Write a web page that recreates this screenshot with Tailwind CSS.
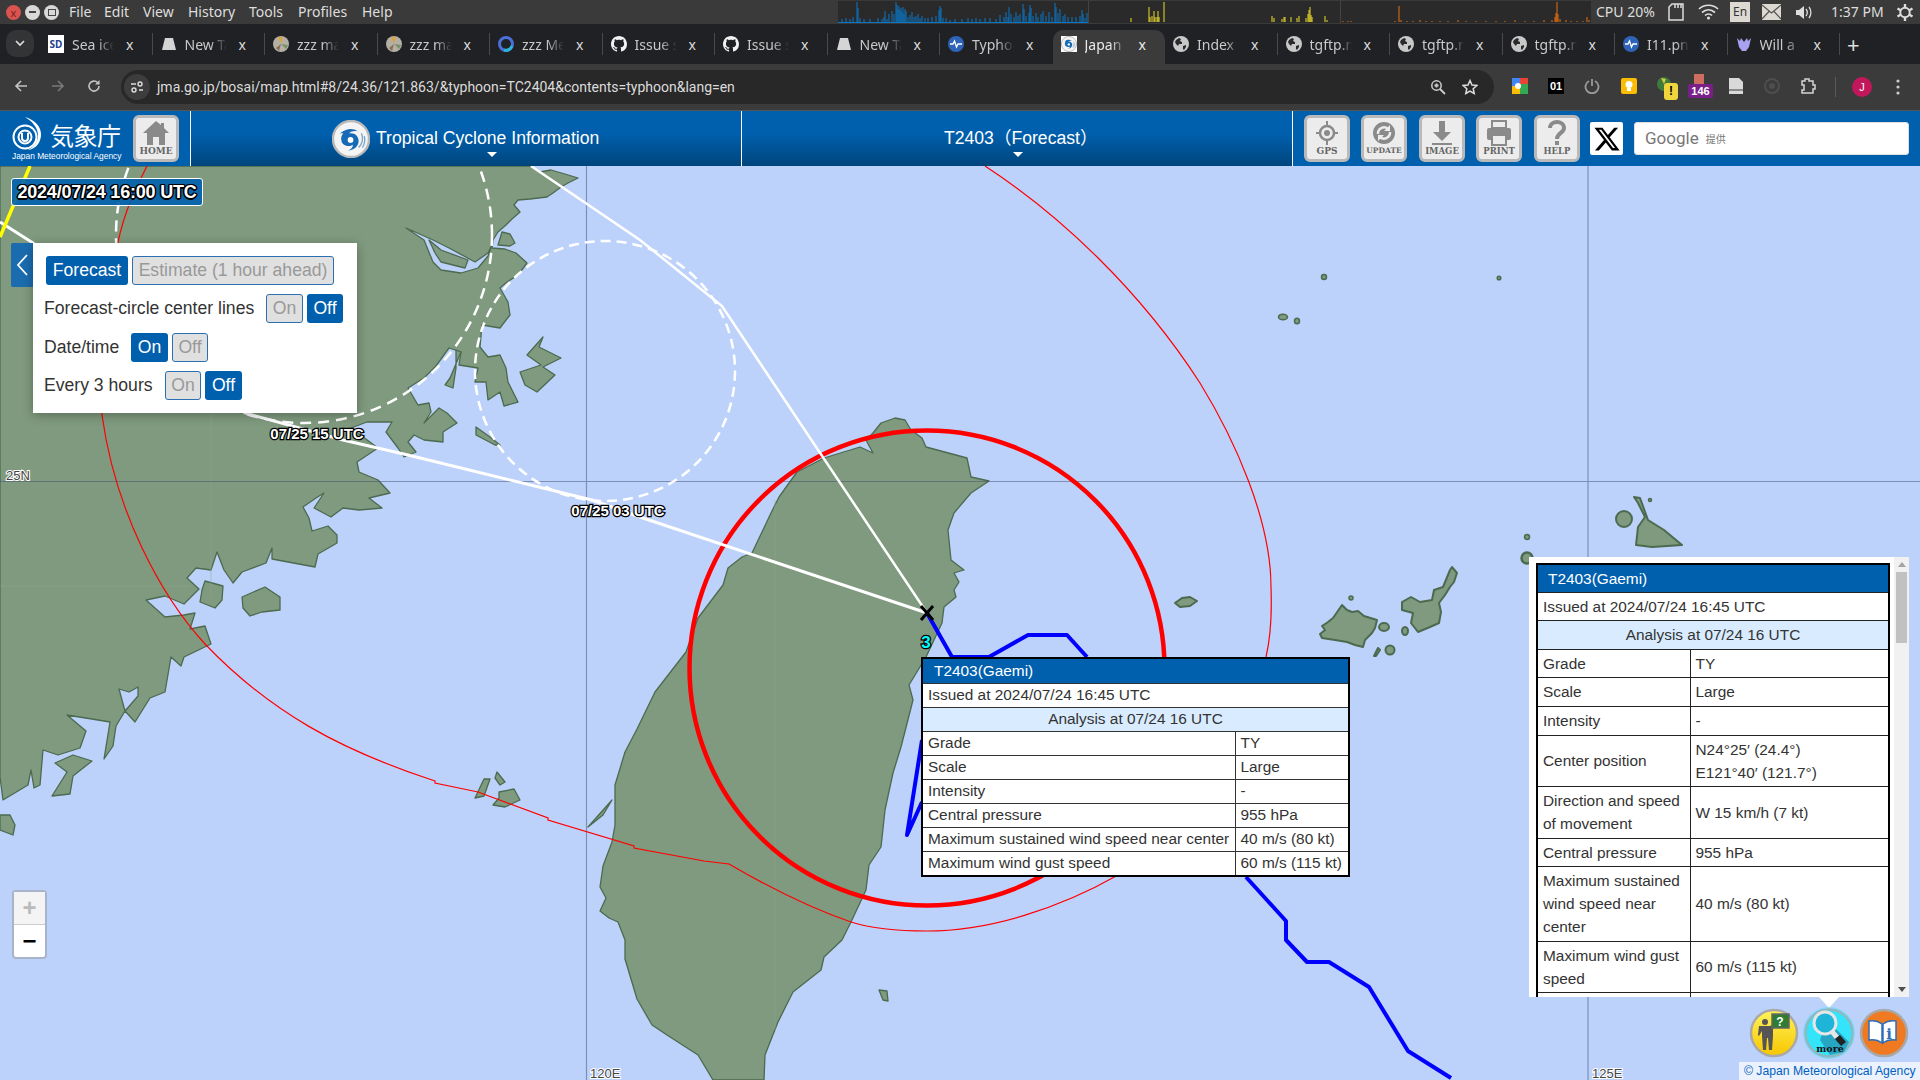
<!DOCTYPE html>
<html lang="en">
<head>
<meta charset="utf-8">
<title>Tropical Cyclone Information</title>
<script src="https://cdn.jsdelivr.net/npm/@tailwindcss/browser@4"></script>
</head>
<body class="w-[1920px] h-[1080px] overflow-hidden bg-[#202124] font-['Liberation_Sans',sans-serif]">
<svg width="0" height="0" class="absolute">
  <defs>
    <symbol id="gh" viewBox="0 0 16 16"><path fill="#f2f2f2" d="M8 0C3.58 0 0 3.58 0 8c0 3.54 2.29 6.53 5.47 7.59.4.07.55-.17.55-.38 0-.19-.01-.82-.01-1.49-2.01.37-2.53-.49-2.69-.94-.09-.23-.48-.94-.82-1.13-.28-.15-.68-.52-.01-.53.63-.01 1.08.58 1.23.82.72 1.21 1.87.87 2.33.66.07-.52.28-.87.51-1.07-1.78-.2-3.64-.89-3.64-3.95 0-.87.31-1.59.82-2.15-.08-.2-.36-1.02.08-2.12 0 0 .67-.21 2.2.82.64-.18 1.32-.27 2-.27.68 0 1.36.09 2 .27 1.53-1.04 2.2-.82 2.2-.82.44 1.1.16 1.92.08 2.12.51.56.82 1.27.82 2.15 0 3.07-1.87 3.75-3.65 3.95.29.25.54.73.54 1.48 0 1.07-.01 1.93-.01 2.2 0 .21.15.46.55.38A8.013 8.013 0 0016 8c0-4.42-3.58-8-8-8z"/></symbol>
    <symbol id="globe" viewBox="0 0 16 16"><circle cx="8" cy="8" r="8" fill="#c8c8c8"/><path fill="#2a2a2a" d="M3 4l3-2 2 1-1 2 2 1 0 2-3 0-1 2-2-2-1-2zM10 10l3-1 0 2-2 3-1-1z"/></symbol>
    <symbol id="newtab" viewBox="0 0 16 16"><path fill="#d5d5d5" d="M4 2h8l3 12H1z"/></symbol>
    <symbol id="marker" viewBox="0 0 16 16"><circle cx="8" cy="8" r="8" fill="#b5b0a5"/><path fill="#d9a441" d="M8 8L5 1h5z"/><path fill="#7d8f6a" d="M8 8l7 1-2 4z"/><path fill="#8a6d5a" d="M8 8l-2 7-3-3z"/></symbol>
    <symbol id="pulse" viewBox="0 0 16 16"><circle cx="8" cy="8" r="8" fill="#2e63b8"/><path fill="none" stroke="#fff" stroke-width="1.3" d="M2 8h3l1.5-3 2 6L10 8h4"/></symbol>
    <symbol id="swirl" viewBox="0 0 40 40"><circle cx="20" cy="20" r="19" fill="#f4f4f4" stroke="#b9b9b9" stroke-width="2.5"/><path fill="#1569b5" d="M10 13c5-4 12-5 17-1-4-1-7 0-9 2 6-1 10 3 10 8 0 6-6 10-11 10 3-1 5-3 5-6-4 3-11 1-12-4-1-3 0-6 2-8-2 0-3 0-4 1z"/><circle cx="19.500" cy="21" r="3" fill="#fff"/><path fill="none" stroke="#7aa6cc" stroke-width="1.4" d="M31 14c2 5 1 11-3 15M34 17c1 4 0 9-2 12"/></symbol>
  </defs>
</svg>

<!-- system bar -->
<div class="h-[24px] bg-[#3a3a3a] flex items-center text-[#dedede] text-[14px] font-['Noto_Sans',sans-serif] relative">
  <div class="flex items-center w-[69px] pl-[6px] gap-[4px] shrink-0">
    <span class="w-[15px] h-[15px] rounded-full bg-[#d9534f] text-[#7a1f1c] text-[11px] leading-[15px] text-center">x</span>
    <span class="w-[15px] h-[15px] rounded-full bg-[#d8d8d8] flex items-center justify-center"><span class="w-[7px] h-[2px] bg-[#444]"></span></span>
    <span class="w-[15px] h-[15px] rounded-full bg-[#d8d8d8] flex items-center justify-center"><span class="w-[8px] h-[7px] border-[1.5px] border-[#444]"></span></span>
  </div>
  <div class="flex items-center leading-[24px] text-[14px] w-[769px] shrink-0">
    <span class="w-[35px]">File</span><span class="w-[39px]">Edit</span><span class="w-[45px]">View</span><span class="w-[61px]">History</span><span class="w-[49px]">Tools</span><span class="w-[64px]">Profiles</span><span>Help</span>
  </div>
  <svg width="753" height="22" viewBox="838 2 753 22" class="shrink-0 bg-[#2a2a2a]">
    <path stroke="#0b76c4" stroke-width="1" fill="none" d="M838 23.500H1088M842 23V20M846 23V19M850 23V20M853 23V18M857 23V3M858 23V9M860 23V19M864 23V20M870 23V20M878 23V19M882 23V20M884 23V18M885 23V12M887 23V20M889 23V15M892 23V12M894 23V15M896 23V3M897 23V6M898 23V10M899 23V7M900 23V11M901 23V9M902 23V13M903 23V8M904 23V15M905 23V10M906 23V12M908 23V18M910 23V16M912 23V13M914 23V18M916 23V17M918 23V15M920 23V19M922 23V17M925 23V19M928 23V19M932 23V18M936 23V17M939 23V11M940 23V7M941 23V9M943 23V19M946 23V19M950 23V21M955 23V20M962 23V20M968 23V19M972 23V20M976 23V19M980 23V20M985 23V19M990 23V19M996 23V20M1000 23V16M1004 23V18M1006 23V13M1008 23V18M1009 23V8M1011 23V15M1014 23V18M1016 23V13M1018 23V17M1020 23V15M1023 23V5M1024 23V10M1026 23V17M1029 23V14M1030 23V6M1031 23V9M1033 23V17M1036 23V14M1038 23V18M1041 23V15M1043 23V12M1046 23V17M1049 23V13M1052 23V18M1055 23V4M1056 23V8M1058 23V14M1060 23V10M1063 23V17M1065 23V15M1068 23V18M1072 23V18M1076 23V18M1080 23V17M1082 23V11M1083 23V15M1085 23V19M1087 23V14"/>
    <rect x="1088" y="2" width="1" height="22" fill="#444"/>
    <path stroke="#ecdc2b" stroke-width="1" fill="none" d="M1131 23V19M1149 23V8M1150 23V18M1152 23V17M1154 23V12M1155 23V18M1157 23V18M1158 23V12M1159 23V18M1164 23V3M1272 23V17M1274 23V19M1282 23V20M1284 23V18M1285 23V18M1291 23V18M1297 23V19M1299 23V17M1306 23V19M1308 23V15M1309 23V11M1310 23V8M1311 23V16M1312 23V18M1325 23V17M1327 23V21"/>
    <rect x="1340" y="2" width="1" height="22" fill="#444"/>
    <path stroke="#e8700f" stroke-width="1" fill="none" d="M1343 23V22M1348 23V22M1351 23V22M1395 23V22M1399 23V7M1401 23V21M1407 23V22M1413 23V22M1420 23V21M1426 23V22M1432 23V22M1440 23V22M1448 23V22M1458 23V21M1466 23V22M1476 23V22M1486 23V22M1496 23V22M1505 23V22M1515 23V21M1525 23V22M1534 23V22M1544 23V21M1552 23V21M1555 23V18M1556 23V14M1557 23V3M1558 23V15M1560 23V20M1566 23V21M1571 23V22M1577 23V22M1583 23V22M1587 23V18M1589 23V21"/>
  </svg>
  <span class="absolute left-[1596px] top-0 leading-[24px] text-[14px]">CPU 20%</span>
  <svg class="absolute left-[1668px] top-[3px]" width="16" height="18" viewBox="0 0 16 18"><path fill="none" stroke="#ddd" stroke-width="1.5" d="M4 1h11v16H1V4zM7 1v4M10 1v4M13 1v4"/></svg>
  <svg class="absolute left-[1698px] top-[4px]" width="21" height="16" viewBox="0 0 21 16"><path fill="none" stroke="#ddd" stroke-width="1.700" d="M1 5c5-5 14-5 19 0M4 8.500c4-3.500 9-3.500 13 0M7 11.500c2-2 5-2 7 0"/><circle cx="10.500" cy="14" r="1.600" fill="#ddd"/></svg>
  <span class="absolute left-[1730px] top-[2px] w-[20px] h-[20px] bg-[#ddd9d2] text-[#333] text-[12px] leading-[20px] text-center">En</span>
  <svg class="absolute left-[1762px] top-[4px]" width="19" height="16" viewBox="0 0 19 16"><rect width="19" height="16" fill="#ddd9d2"/><path fill="none" stroke="#555" stroke-width="1.200" d="M0 1l9.500 8L19 1M0 15l7-7.500M19 15l-7-7.500"/></svg>
  <svg class="absolute left-[1796px] top-[5px]" width="18" height="15" viewBox="0 0 18 15"><path fill="#ddd" d="M0 5h3l5-4v13l-5-4H0z"/><path fill="none" stroke="#ddd" stroke-width="1.300" d="M10 4c1.500 2 1.500 5 0 7M13 2c2.500 3 2.500 8 0 11"/></svg>
  <span class="absolute left-[1831px] top-0 leading-[24px] text-[14px]">1:37 PM</span>
  <svg class="absolute left-[1897px] top-[4px]" width="16" height="17" viewBox="0 0 16 17"><circle cx="8" cy="8.500" r="4.700" fill="none" stroke="#ddd" stroke-width="2"/><path stroke="#ddd" stroke-width="2.400" d="M8 0v3.500M8 13.500V17M0.500 4.500l3 1.800M12.500 10.700l3 1.800M0.500 12.500l3-1.800M12.500 6.300l3-1.800"/></svg>
</div>

<!-- tab strip -->
<div class="h-[40px] bg-[#202124] flex items-end text-[#c9c9c9] text-[14px] font-['Noto_Sans',sans-serif] relative">
  <div class="w-[28px] h-[27px] ml-[6px] mb-[7px] mr-[6px] bg-[#333436] rounded-[10px] flex items-center justify-center shrink-0">
    <svg width="10" height="7" viewBox="0 0 10 7"><path fill="none" stroke="#ddd" stroke-width="1.700" d="M1 1l4 4 4-4"/></svg>
  </div>
  <div class="flex h-[34px]">
    <div class="w-[112.500px] flex items-center pl-[8px] border-r border-[#4a4a4a] mt-[3px] h-[22px] shrink-0"><span class="w-[16px] h-[18px] bg-white text-[10px] leading-[18px] text-center text-[#1d3f8f] font-bold shrink-0">SD</span><span class="w-[42px] ml-[8px] mr-[4px] overflow-hidden whitespace-nowrap [mask-image:linear-gradient(90deg,#000_60%,transparent)]">Sea ice</span><span class="ml-[8px] text-[#ddd]">x</span></div>
    <div class="w-[112.500px] flex items-center pl-[8px] border-r border-[#4a4a4a] mt-[3px] h-[22px] shrink-0"><svg class="shrink-0" width="16" height="16"><use href="#newtab"/></svg><span class="w-[42px] ml-[8px] mr-[4px] overflow-hidden whitespace-nowrap [mask-image:linear-gradient(90deg,#000_60%,transparent)]">New Tab</span><span class="ml-[8px] text-[#ddd]">x</span></div>
    <div class="w-[112.500px] flex items-center pl-[8px] border-r border-[#4a4a4a] mt-[3px] h-[22px] shrink-0"><svg class="shrink-0" width="16" height="16"><use href="#marker"/></svg><span class="w-[42px] ml-[8px] mr-[4px] overflow-hidden whitespace-nowrap [mask-image:linear-gradient(90deg,#000_60%,transparent)]">zzz map</span><span class="ml-[8px] text-[#ddd]">x</span></div>
    <div class="w-[112.500px] flex items-center pl-[8px] border-r border-[#4a4a4a] mt-[3px] h-[22px] shrink-0"><svg class="shrink-0" width="16" height="16"><use href="#marker"/></svg><span class="w-[42px] ml-[8px] mr-[4px] overflow-hidden whitespace-nowrap [mask-image:linear-gradient(90deg,#000_60%,transparent)]">zzz map</span><span class="ml-[8px] text-[#ddd]">x</span></div>
    <div class="w-[112.500px] flex items-center pl-[8px] border-r border-[#4a4a4a] mt-[3px] h-[22px] shrink-0"><svg class="shrink-0" width="16" height="16" viewBox="0 0 16 16"><circle cx="8" cy="8" r="6.500" fill="none" stroke="#4a6fd8" stroke-width="3"/><path fill="none" stroke="#29b6d8" stroke-width="3" d="M14 10a6.500 6.500 0 0 1-8 4"/></svg><span class="w-[42px] ml-[8px] mr-[4px] overflow-hidden whitespace-nowrap [mask-image:linear-gradient(90deg,#000_60%,transparent)]">zzz Met</span><span class="ml-[8px] text-[#ddd]">x</span></div>
    <div class="w-[112.500px] flex items-center pl-[8px] border-r border-[#4a4a4a] mt-[3px] h-[22px] shrink-0"><svg class="shrink-0" width="16" height="16"><use href="#gh"/></svg><span class="w-[42px] ml-[8px] mr-[4px] overflow-hidden whitespace-nowrap [mask-image:linear-gradient(90deg,#000_60%,transparent)]">Issue s</span><span class="ml-[8px] text-[#ddd]">x</span></div>
    <div class="w-[112.500px] flex items-center pl-[8px] border-r border-[#4a4a4a] mt-[3px] h-[22px] shrink-0"><svg class="shrink-0" width="16" height="16"><use href="#gh"/></svg><span class="w-[42px] ml-[8px] mr-[4px] overflow-hidden whitespace-nowrap [mask-image:linear-gradient(90deg,#000_60%,transparent)]">Issue s</span><span class="ml-[8px] text-[#ddd]">x</span></div>
    <div class="w-[112.500px] flex items-center pl-[8px] border-r border-[#4a4a4a] mt-[3px] h-[22px] shrink-0"><svg class="shrink-0" width="16" height="16"><use href="#newtab"/></svg><span class="w-[42px] ml-[8px] mr-[4px] overflow-hidden whitespace-nowrap [mask-image:linear-gradient(90deg,#000_60%,transparent)]">New Tab</span><span class="ml-[8px] text-[#ddd]">x</span></div>
    <div class="w-[112.500px] flex items-center pl-[8px] mt-[3px] h-[22px] shrink-0"><svg class="shrink-0" width="16" height="16"><use href="#pulse"/></svg><span class="w-[42px] ml-[8px] mr-[4px] overflow-hidden whitespace-nowrap [mask-image:linear-gradient(90deg,#000_60%,transparent)]">Typhoon</span><span class="ml-[8px] text-[#ddd]">x</span></div>
    <div class="w-[112.500px] flex items-center pl-[8px] pb-[6px] bg-[#3b3b3b] rounded-t-[10px] h-[34px] shrink-0 text-[#e8e8e8]"><svg class="shrink-0 bg-white" width="16" height="16"><use href="#swirl"/></svg><span class="w-[42px] ml-[8px] mr-[4px] overflow-hidden whitespace-nowrap [mask-image:linear-gradient(90deg,#000_60%,transparent)]">Japan</span><span class="ml-[8px] text-[#eee]">x</span></div>
    <div class="w-[112.500px] flex items-center pl-[8px] border-r border-[#4a4a4a] mt-[3px] h-[22px] shrink-0"><svg class="shrink-0" width="16" height="16"><use href="#globe"/></svg><span class="w-[42px] ml-[8px] mr-[4px] overflow-hidden whitespace-nowrap [mask-image:linear-gradient(90deg,#000_70%,transparent)]">Index</span><span class="ml-[8px] text-[#ddd]">x</span></div>
    <div class="w-[112.500px] flex items-center pl-[8px] border-r border-[#4a4a4a] mt-[3px] h-[22px] shrink-0"><svg class="shrink-0" width="16" height="16"><use href="#globe"/></svg><span class="w-[42px] ml-[8px] mr-[4px] overflow-hidden whitespace-nowrap [mask-image:linear-gradient(90deg,#000_70%,transparent)]">tgftp.n</span><span class="ml-[8px] text-[#ddd]">x</span></div>
    <div class="w-[112.500px] flex items-center pl-[8px] border-r border-[#4a4a4a] mt-[3px] h-[22px] shrink-0"><svg class="shrink-0" width="16" height="16"><use href="#globe"/></svg><span class="w-[42px] ml-[8px] mr-[4px] overflow-hidden whitespace-nowrap [mask-image:linear-gradient(90deg,#000_70%,transparent)]">tgftp.n</span><span class="ml-[8px] text-[#ddd]">x</span></div>
    <div class="w-[112.500px] flex items-center pl-[8px] border-r border-[#4a4a4a] mt-[3px] h-[22px] shrink-0"><svg class="shrink-0" width="16" height="16"><use href="#globe"/></svg><span class="w-[42px] ml-[8px] mr-[4px] overflow-hidden whitespace-nowrap [mask-image:linear-gradient(90deg,#000_70%,transparent)]">tgftp.n</span><span class="ml-[8px] text-[#ddd]">x</span></div>
    <div class="w-[112.500px] flex items-center pl-[8px] border-r border-[#4a4a4a] mt-[3px] h-[22px] shrink-0"><svg class="shrink-0" width="16" height="16"><use href="#pulse"/></svg><span class="w-[42px] ml-[8px] mr-[4px] overflow-hidden whitespace-nowrap [mask-image:linear-gradient(90deg,#000_70%,transparent)]">I11.png</span><span class="ml-[8px] text-[#ddd]">x</span></div>
    <div class="w-[112.500px] flex items-center pl-[8px] border-r border-[#4a4a4a] mt-[3px] h-[22px] shrink-0"><svg class="shrink-0" width="16" height="16" viewBox="0 0 16 16"><path fill="#a8a2f0" d="M1 2l3 3 1-3 3 4 3-4 1 3 3-3-2 9-3 4H6l-3-4z"/></svg><span class="w-[42px] ml-[8px] mr-[4px] overflow-hidden whitespace-nowrap [mask-image:linear-gradient(90deg,#000_60%,transparent)]">Will a</span><span class="ml-[8px] text-[#ddd]">x</span></div>
    <span class="ml-[7px] text-[22px] leading-[28px] text-[#ddd]">+</span>
  </div>
</div>

<!-- address toolbar -->
<div class="h-[46px] bg-[#3b3b3b] flex items-center relative">
  <svg class="absolute left-[14px] top-[15px]" width="14" height="14" viewBox="0 0 14 14"><path fill="none" stroke="#c4c4c4" stroke-width="1.600" d="M13 7H2M7 2L2 7l5 5"/></svg>
  <svg class="absolute left-[51px] top-[15px]" width="14" height="14" viewBox="0 0 14 14"><path fill="none" stroke="#7a7a7a" stroke-width="1.600" d="M1 7h11M7 2l5 5-5 5"/></svg>
  <svg class="absolute left-[87px] top-[15px]" width="14" height="14" viewBox="0 0 14 14"><path fill="none" stroke="#c4c4c4" stroke-width="1.600" d="M12 7a5 5 0 1 1-1.500-3.500L12 5"/><path fill="#c4c4c4" d="M12.500 1v4.500H8z"/></svg>
  <div class="absolute left-[121px] top-[6px] w-[1373px] h-[34px] bg-[#282828] rounded-full flex items-center">
    <span class="w-[26px] h-[26px] ml-[3px] rounded-full bg-[#3d3d3d] flex items-center justify-center"><svg width="14" height="14" viewBox="0 0 14 14"><path fill="none" stroke="#ddd" stroke-width="1.400" d="M1 4h5M9 10h4"/><circle cx="10" cy="4" r="2" fill="none" stroke="#ddd" stroke-width="1.400"/><circle cx="4" cy="10" r="2" fill="none" stroke="#ddd" stroke-width="1.400"/></svg></span>
    <span class="ml-[7px] text-[14px] text-[#dcdcdc] font-['Roboto',sans-serif] whitespace-nowrap">jma.go.jp/bosai/map.html#8/24.36/121.863/&amp;typhoon=TC2404&amp;contents=typhoon&amp;lang=en</span>
  </div>
  <svg class="absolute left-[1430px] top-[15px]" width="16" height="16" viewBox="0 0 16 16"><circle cx="6.500" cy="6.500" r="4.700" fill="none" stroke="#ccc" stroke-width="1.500"/><path stroke="#ccc" stroke-width="1.800" d="M10 10l5 5M4.500 6.500h4M6.500 4.500v4"/></svg>
  <svg class="absolute left-[1462px] top-[15px]" width="16" height="16" viewBox="0 0 16 16"><path fill="none" stroke="#ddd" stroke-width="1.500" d="M8 1.500l2 4.500 4.800.5-3.600 3.200 1 4.800L8 12l-4.200 2.500 1-4.800L1.200 6.500 6 6z"/></svg>
  <svg class="absolute left-[1512px] top-[14px]" width="16" height="16" viewBox="0 0 16 16"><rect width="16" height="16" fill="#34a853"/><path fill="#fbbc05" d="M0 8h8v8H0z"/><path fill="#ea4335" d="M8 0h8v6H8z"/><path fill="#4285f4" d="M0 0h8v8H0z"/><circle cx="6" cy="8" r="3" fill="#fff"/></svg>
  <span class="absolute left-[1548px] top-[14px] w-[16px] h-[16px] bg-black text-white text-[11px] font-bold leading-[16px] text-center">01</span>
  <svg class="absolute left-[1584px] top-[14px]" width="16" height="16" viewBox="0 0 16 16"><path fill="none" stroke="#999" stroke-width="1.800" d="M5 3a6.500 6.500 0 1 0 6 0M8 1v7"/></svg>
  <svg class="absolute left-[1621px] top-[14px]" width="16" height="16" viewBox="0 0 16 16"><rect width="16" height="16" rx="2" fill="#fbbc04"/><circle cx="8" cy="6.500" r="3.500" fill="#fff"/><rect x="6" y="10" width="4" height="3" fill="#fff"/></svg>
  <svg class="absolute left-[1656px] top-[12px]" width="16" height="16" viewBox="0 0 16 16"><circle cx="8" cy="8" r="7" fill="#3e7a3a"/><path fill="#d8c84a" d="M5 2l5 1-2 5z"/></svg>
  <span class="absolute left-[1664px] top-[19px] w-[14px] h-[17px] rounded-[3px] bg-[#f0d53c] text-black text-[12px] font-bold leading-[17px] text-center">!</span>
  <svg class="absolute left-[1692px] top-[10px]" width="14" height="10" viewBox="0 0 14 10"><rect x="2" width="10" height="10" fill="#cf6d5e"/></svg>
  <span class="absolute left-[1688px] top-[20px] w-[25px] h-[14px] rounded-[2px] bg-[#7a1f8a] text-white text-[11px] font-bold leading-[14px] text-center">146</span>
  <svg class="absolute left-[1729px] top-[14px]" width="14" height="16" viewBox="0 0 14 16"><path fill="#d9d9d9" d="M0 0h10l4 4v12H0z"/><rect y="11" width="14" height="2" fill="#8a8a8a"/></svg>
  <svg class="absolute left-[1764px] top-[14px]" width="16" height="16" viewBox="0 0 16 16"><circle cx="8" cy="8" r="7" fill="none" stroke="#4e4e4e" stroke-width="2"/><circle cx="8" cy="8" r="3" fill="#4e4e4e"/></svg>
  <svg class="absolute left-[1800px] top-[14px]" width="16" height="16" viewBox="0 0 16 16"><path fill="none" stroke="#d5d5d5" stroke-width="1.500" d="M2 3h3V1h4v2h4v4h2v4h-2v4H2v-3h2V7H2z"/></svg>
  <span class="absolute left-[1835px] top-[13px] w-px h-[20px] bg-[#5a5a5a]"></span>
  <span class="absolute left-[1852px] top-[13px] w-[20px] h-[20px] rounded-full bg-[#c2185b] text-white text-[11px] leading-[20px] text-center">J</span>
  <svg class="absolute left-[1896px] top-[15px]" width="4" height="16" viewBox="0 0 4 16"><circle cx="2" cy="2" r="1.600" fill="#ccc"/><circle cx="2" cy="8" r="1.600" fill="#ccc"/><circle cx="2" cy="14" r="1.600" fill="#ccc"/></svg>
</div>
<div class="h-px bg-[#555]"></div>

<!-- JMA header -->
<div class="h-[55px] bg-[#0060ae] flex text-white relative">
  <div class="w-[190px] relative shrink-0 border-r border-white box-content">
    <svg class="absolute left-[11px] top-[5px]" width="34" height="36" viewBox="0 0 34 36"><circle cx="14" cy="21" r="11.500" fill="none" stroke="#fff" stroke-width="2"/><circle cx="14" cy="21" r="6.500" fill="none" stroke="#fff" stroke-width="2"/><path fill="none" stroke="#fff" stroke-width="2" d="M11 17v5a3 3 0 0 0 6 0v-5"/><path fill="#fff" d="M14 1c8 2 17 9 16 19-1 8-6 13-13 14 6-3 10-8 10-15 0-7-6-14-13-18z"/></svg>
    <span class="absolute left-[50px] top-[9px] text-[24px] leading-[30px] font-['Noto_Sans_CJK_JP',sans-serif] whitespace-nowrap tracking-[-0.500px]">気象庁</span>
    <span class="absolute left-[12px] top-[40px] text-[8.400px] leading-[11px] whitespace-nowrap">Japan Meteorological Agency</span>
    <div class="absolute left-[133px] top-[4px] w-[46px] h-[47px] rounded-[6px] border-[3px] border-[#b9b9b9] bg-[#ececec] flex flex-col items-center pt-[2px]">
      <svg width="28" height="26" viewBox="0 0 28 26"><path fill="#8a8a8a" d="M14 1L1 13h4v12h6v-8h6v8h6V13h4l-5-5V3h-3v2z"/></svg>
      <span class="text-[9px] leading-[10px] font-bold text-[#666] font-['DejaVu_Serif',serif]">HOME</span>
    </div>
  </div>
  <div class="w-[550px] shrink-0 relative bg-gradient-to-b from-[#0060ae] from-40% to-[#00457c] border-r border-white box-content">
    <svg class="absolute left-[141px] top-[9px]" width="38" height="38"><use href="#swirl"/></svg>
    <span class="absolute left-[185px] top-[15px] text-[17.600px] leading-[24px] whitespace-nowrap">Tropical Cyclone Information</span>
    <span class="absolute left-[296px] top-[41px] w-0 h-0 border-x-[5px] border-x-transparent border-t-[5px] border-t-white"></span>
  </div>
  <div class="w-[550px] shrink-0 relative bg-gradient-to-b from-[#0060ae] from-40% to-[#00457c] border-r border-white box-content">
    <span class="absolute left-[202px] top-[15px] text-[17.600px] leading-[24px] whitespace-nowrap font-['Liberation_Sans','Noto_Sans_CJK_JP',sans-serif]">T2403（Forecast）</span>
    <span class="absolute left-[271px] top-[41px] w-0 h-0 border-x-[5px] border-x-transparent border-t-[5px] border-t-white"></span>
  </div>
  <div class="flex-1 relative">
    <div class="absolute left-[11px] top-[4px] w-[46px] h-[47px] rounded-[6px] border-[3px] border-[#b9b9b9] bg-[#ececec] flex flex-col items-center pt-[2px]">
      <svg width="24" height="26" viewBox="0 0 24 26"><circle cx="12" cy="13" r="7" fill="none" stroke="#8a8a8a" stroke-width="2.500"/><circle cx="12" cy="13" r="3" fill="#8a8a8a"/><path stroke="#8a8a8a" stroke-width="2" d="M12 1v6M12 19v6M1 13h5M18 13h5"/></svg>
      <span class="text-[9px] leading-[10px] font-bold text-[#666] font-['DejaVu_Serif',serif]">GPS</span>
    </div>
    <div class="absolute left-[68px] top-[4px] w-[46px] h-[47px] rounded-[6px] border-[3px] border-[#b9b9b9] bg-[#ececec] flex flex-col items-center pt-[2px]">
      <svg width="24" height="26" viewBox="0 0 24 26"><circle cx="12" cy="13" r="11" fill="#8a8a8a"/><path fill="none" stroke="#ececec" stroke-width="2.500" d="M6 14a6 6 0 0 1 10-5M18 12a6 6 0 0 1-10 5"/><path fill="#ececec" d="M18 5v6h-6zM6 21v-6h6z"/></svg>
      <span class="text-[7.500px] leading-[10px] font-bold text-[#666] font-['DejaVu_Serif',serif]">UPDATE</span>
    </div>
    <div class="absolute left-[126px] top-[4px] w-[46px] h-[47px] rounded-[6px] border-[3px] border-[#b9b9b9] bg-[#ececec] flex flex-col items-center pt-[2px]">
      <svg width="24" height="26" viewBox="0 0 24 26"><path fill="#8a8a8a" d="M9 1h6v11h6l-9 9-9-9h6zM2 23h20v2H2z"/></svg>
      <span class="text-[8.500px] leading-[10px] font-bold text-[#666] font-['DejaVu_Serif',serif]">IMAGE</span>
    </div>
    <div class="absolute left-[183px] top-[4px] w-[46px] h-[47px] rounded-[6px] border-[3px] border-[#b9b9b9] bg-[#ececec] flex flex-col items-center pt-[2px]">
      <svg width="26" height="26" viewBox="0 0 26 26"><rect x="6" y="1" width="14" height="7" fill="none" stroke="#8a8a8a" stroke-width="2"/><rect x="1" y="8" width="24" height="12" rx="2" fill="#8a8a8a"/><rect x="6" y="15" width="14" height="10" fill="#ececec" stroke="#8a8a8a" stroke-width="2"/></svg>
      <span class="text-[8.500px] leading-[10px] font-bold text-[#666] font-['DejaVu_Serif',serif]">PRINT</span>
    </div>
    <div class="absolute left-[241px] top-[4px] w-[46px] h-[47px] rounded-[6px] border-[3px] border-[#b9b9b9] bg-[#ececec] flex flex-col items-center pt-[2px]">
      <svg width="20" height="26" viewBox="0 0 20 26"><path fill="none" stroke="#8a8a8a" stroke-width="4" d="M3 8c0-8 14-8 14 0 0 5-7 5-7 11"/><rect x="8" y="21" width="4" height="4" fill="#8a8a8a"/></svg>
      <span class="text-[8.500px] leading-[10px] font-bold text-[#666] font-['DejaVu_Serif',serif]">HELP</span>
    </div>
    <div class="absolute left-[297px] top-[11px] w-[33px] h-[33px] bg-white rounded-[2px] flex items-center justify-center">
      <svg width="28" height="28" viewBox="0 0 24 24"><path fill="#000" d="M18.244 2.25h3.308l-7.227 8.26 8.502 11.24H16.17l-5.214-6.817L4.99 21.75H1.68l7.73-8.835L1.254 2.25H8.08l4.713 6.231zm-1.161 17.52h1.833L7.084 4.126H5.117z"/></svg>
    </div>
    <div class="absolute left-[341px] top-[11px] w-[275px] h-[33px] bg-white rounded-[3px] border border-[#ddd] flex items-center pl-[10px] gap-[7px]">
      <span class="text-[17px] text-[#777] font-['Roboto',sans-serif]">Google</span>
      <span class="text-[10px] text-[#777] font-['Noto_Sans_CJK_TC',sans-serif]">提供</span>
    </div>
  </div>
</div>

<!-- map -->
<div class="relative h-[914px] overflow-hidden bg-[#bdd2fb]">
  <svg class="absolute inset-0" width="1920" height="914" viewBox="0 166 1920 914">
    <g fill="#7f9a7e" stroke="#4c6a4f" stroke-width="1.300" stroke-linejoin="round">
      <!-- mainland -->
      <path d="M0 166H531L540 172L551 170L565 174L578 178L568 183L561 187L553 193L547 197L530 199L518 200L514 205L520 212L512 219L506 225L498 232L493 240L492 248L505 249L516 253L527 263L518 275L507 282L500 288L508 302L510 315L500 328L482 325L480 347L488 357L500 355L506 368L508 382L518 402L504 406L500 392L488 400L486 382L475 382L478 368L459 365L461 352L449 348L436 366L424 378L408 388L418 405L429 403L431 412L424 423L439 408L447 413L457 423L443 432L443 442L424 440L414 435L408 442L416 452L404 457L398 448L386 432L392 422L367 422L351 428L378 448L357 462L359 472L378 480L390 493L369 498L382 508L359 510L343 508L331 517L314 508L324 493L316 498L303 507L309 518L312 531L328 526L337 535L337 543L318 554L315 567L272 559L272 548L266 563L242 572L233 583L224 570L217 552L211 570L196 568L187 578L199 589L184 604L165 596L146 600L165 617L184 615L195 613L190 629L205 626L211 644L184 657L181 666L171 657L165 692L150 698L135 722L125 711L138 696L138 687L129 692L119 689L125 711L116 726L113 746L104 759L110 722L98 720L67 715L86 731L80 748L58 755L43 750L40 785L34 788L31 770L28 785L3 800L0 777Z"/>
      <!-- inlet -->
      <path fill="#bdd2fb" d="M406 228L433 240L449 248L475 262L488 253L492 245L488 256L478 268L461 273L441 270L433 262L424 240Z"/>
      <path d="M429 240L441 250L468 260L465 268L441 262L435 253Z"/>
      <!-- coastal islands -->
      <path d="M498 245L502 232L510 234L515 243L510 246Z"/>
      <path d="M456 350L461 352L450 378L445 385L453 388L456 368Z"/>
      <path d="M543 337L539 347L561 358L543 367L555 375L537 392L525 385L520 372L541 365L527 355Z"/>
      <path d="M476 427L490 437L500 445L495 445L476 435Z"/>
      <path d="M73 755L92 761L73 776L70 794L52 796L67 772L55 763Z"/>
      <path d="M205 581L223 586L222 600L215 608L200 602L202 590Z"/>
      <path d="M242 597L265 587L280 597L280 610L262 612L250 616L243 608Z"/>
      <path d="M0 815L10 815L15 825L13 835L0 830Z"/>
      <path d="M497 772L505 782L500 785L495 778Z"/>
      <path d="M484 779L490 779L484 796L475 798Z"/>
      <path d="M499 792L514 789L520 800L505 807L493 805L499 798Z"/>
      <!-- Taiwan -->
      <path d="M873 433L881 423L895 418L905 420L911 430L922 438L926 447L967 458L971 477L989 481L971 493L954 513L948 530L951 560L964 570L954 573L959 582L954 590L956 597L944 607L942 623L926 657L909 685L913 700L901 747L893 773L885 810L881 847L869 865L866 890L851 922L842 940L824 957L821 970L793 992L778 1022L765 1055L764 1080H713L698 1055L667 1035L652 1025L637 999L625 959L625 940L618 922L609 918L600 911L606 898L600 887L603 866L612 842L615 825L615 785L625 752L637 729L655 692L686 652L698 618L723 585L728 568L742 557L752 553L771 513L779 497L797 472L824 458L860 447L873 453L866 440Z"/>
      <path d="M588 827L612 800L603 815Z"/>
      <path d="M879 990L887 991L888 1001L883 1000Z"/>
      <path stroke-width="2" d="M1175 603L1182 598L1190 597L1197 601L1190 606L1180 607Z"/>
      <!-- Ryukyu -->
      <path stroke-width="2" d="M1342 605L1347 610L1352 612L1358 611L1364 616L1377 620L1375 628L1372 633L1365 640L1363 647L1355 645L1347 642L1335 640L1322 638L1320 634L1325 630L1322 626L1328 622L1333 618Z"/>
      <path stroke-width="2" d="M1452 567L1457 573L1454 582L1450 587L1445 595L1439 603L1441 612L1439 623L1430 627L1418 632L1411 623L1413 613L1402 610L1402 602L1411 597L1420 602L1432 600L1434 590L1443 587L1450 570Z"/>
      <ellipse stroke-width="2" cx="1384" cy="627" rx="5" ry="4"/>
      <ellipse stroke-width="2" cx="1405" cy="631" rx="3" ry="4"/>
      <ellipse stroke-width="2" cx="1390" cy="650" rx="4.500" ry="4.500"/>
      <path stroke-width="2" d="M1374 656L1378 648L1380 650L1376 656Z"/>
      <circle stroke-width="1.500" cx="1351" cy="598" r="2"/>
      <path stroke-width="2" d="M1634 497L1640 498L1648 520L1664 530L1682 545L1652 547L1636 545L1638 527L1645 517L1638 503Z"/>
      <ellipse stroke-width="2" cx="1624" cy="519" rx="8" ry="8"/>
      <circle stroke-width="1.500" cx="1650" cy="500" r="1.500"/>
      <circle stroke-width="1.500" cx="1527" cy="537" r="2.500"/>
      <circle stroke-width="2.500" cx="1527" cy="558" r="5.500"/>
      <circle stroke-width="1.500" cx="1324" cy="277" r="2.500"/>
      <circle stroke-width="1.500" cx="1499" cy="278" r="1.800"/>
      <ellipse stroke-width="1.500" cx="1283" cy="317" rx="4.500" ry="2.800"/>
      <ellipse stroke-width="1.500" cx="1297" cy="321" rx="2.500" ry="2.800"/>
    </g>
    <!-- graticule -->
    <path stroke="#8fa88e" stroke-width="1" d="M0 586H190M775 500V1030M211 413V600" opacity="0.5"/>
    <path stroke="#3f4f70" stroke-width="1.200" opacity="0.5" d="M586.500 166V1080M1588 166V1080M0 481.500H1920"/>
    <!-- storm zones -->
    <path fill="none" stroke="#ff0000" stroke-width="1.200" d="M985 166C1060 215 1140 290 1200 383C1235 440 1271 520 1271 587C1272 615 1270 640 1266 657L1118 875C1060 908 990 931 927 931C895 931 870 928 851 922C810 908 765 885 729 864L704 861L634 848L634 846L548 820L548 818L478 792L435 783L435 781C340 750 270 712 205 644C160 595 115 510 102 415C95 350 105 290 118 242C125 210 135 190 147 166"/>
    <circle cx="927" cy="668" r="237.500" fill="none" stroke="#ff0000" stroke-width="4.500"/>
    <!-- forecast tracks -->
    <path fill="none" stroke="#ffffff" stroke-width="3" d="M927 613L640 517L592 500L408 455L343 440L245 413L33 243L0 222"/>
    <path fill="none" stroke="#ffffff" stroke-width="2.500" d="M927 613L722 306L640 240L531 166"/>
    <circle cx="605" cy="371" r="130" fill="none" stroke="#ffffff" stroke-width="2.500" stroke-dasharray="10 6"/>
    <circle cx="304" cy="235" r="188" fill="none" stroke="#ffffff" stroke-width="2.500" stroke-dasharray="11 7"/>
    <path fill="none" stroke="#ffff00" stroke-width="3.500" d="M30 166L0 237"/>
    <!-- past track -->
    <path fill="none" stroke="#0000ff" stroke-width="4" stroke-linejoin="round" d="M927 613L952 657L989 657L1028 635L1067 635L1087 657M922 740L907 835L922 802M1246 877L1286 921V940L1307 962H1329L1369 987L1408 1051L1451 1078"/>
    <path fill="none" stroke="#000000" stroke-width="3" d="M921 606L933 620M933 606L921 620"/>
    <g font-size="15" fill="#ffffff" stroke="#000000" stroke-width="2.600" paint-order="stroke" text-anchor="middle" font-weight="700">
      <text x="317" y="439">07/25 15 UTC</text>
      <text x="618" y="516">07/25 03 UTC</text>
    </g>
    <text x="926" y="648" font-size="17" font-weight="700" fill="#00ffff" stroke="#000000" stroke-width="2.500" paint-order="stroke" text-anchor="middle">3</text>
    <g font-size="13" fill="#444444" stroke="#ffffff" stroke-width="2" paint-order="stroke">
      <text x="6" y="480">25N</text>
      <text x="590" y="1078">120E</text>
      <text x="1592" y="1078">125E</text>
    </g>
  </svg>

  <!-- time chip -->
  <div class="absolute left-[11px] top-[12px] w-[192px] h-[28px] rounded-[3px] border border-white bg-[#0060ae]/90 text-white text-[18px] leading-[26px] text-center whitespace-nowrap font-bold tracking-[-0.200px] [text-shadow:1.500px_0_0_#000,-1.500px_0_0_#000,0_1.500px_0_#000,0_-1.500px_0_#000,1px_1px_0_#000,-1px_-1px_0_#000,1px_-1px_0_#000,-1px_1px_0_#000]">2024/07/24 16:00 UTC</div>

  <!-- option panel -->
  <div class="absolute left-[11px] top-[77px] w-[22px] h-[44px] bg-[#1b6cae] rounded-l-[2px] flex items-center justify-center">
    <svg width="14" height="24" viewBox="0 0 14 24"><path fill="none" stroke="#fff" stroke-width="1.800" d="M12 2L3 12l9 10"/></svg>
  </div>
  <div class="absolute left-[33px] top-[77px] w-[324px] h-[170px] bg-white shadow-[0_2px_10px_rgba(0,0,0,0.3)] text-[#333] text-[17.600px] pl-[11px] pt-[13px] flex flex-col">
    <div class="flex gap-[4px] ml-[2px] h-[29px]">
      <span class="w-[82px] rounded-[3px] bg-[#0060ae] text-white text-center leading-[29px]">Forecast</span>
      <span class="w-[202px] rounded-[3px] bg-[#e0e0e0] border border-[#2a6fb0] text-[#999] text-center leading-[27px]">Estimate (1 hour ahead)</span>
    </div>
    <div class="flex items-center h-[29px] mt-[9px]">
      <span class="w-[222px] whitespace-nowrap">Forecast-circle center lines</span>
      <span class="w-[37px] h-[29px] rounded-[3px] bg-[#e0e0e0] border border-[#2a6fb0] text-[#999] text-center leading-[27px] mr-[4px]">On</span>
      <span class="w-[36px] h-[29px] rounded-[3px] bg-[#0060ae] text-white text-center leading-[29px]">Off</span>
    </div>
    <div class="flex items-center h-[29px] mt-[10px]">
      <span class="w-[87px] whitespace-nowrap">Date/time</span>
      <span class="w-[37px] h-[29px] rounded-[3px] bg-[#0060ae] text-white text-center leading-[29px] mr-[4px]">On</span>
      <span class="w-[36px] h-[29px] rounded-[3px] bg-[#e0e0e0] border border-[#2a6fb0] text-[#999] text-center leading-[27px]">Off</span>
    </div>
    <div class="flex items-center h-[29px] mt-[9px]">
      <span class="w-[121px] whitespace-nowrap">Every 3 hours</span>
      <span class="w-[36px] h-[29px] rounded-[3px] bg-[#e0e0e0] border border-[#2a6fb0] text-[#999] text-center leading-[27px] mr-[4px]">On</span>
      <span class="w-[37px] h-[29px] rounded-[3px] bg-[#0060ae] text-white text-center leading-[29px]">Off</span>
    </div>
  </div>

  <!-- zoom control -->
  <div class="absolute left-[12px] top-[724px] w-[35px] h-[69px] rounded-[4px] border-2 border-[#a9b3c9] bg-white flex flex-col">
    <span class="h-[33px] bg-[#f4f4f4] border-b border-[#ccc] text-[#bbb] text-[24px] leading-[32px] text-center font-bold">+</span>
    <span class="flex-1 text-black text-[24px] leading-[32px] text-center font-bold">−</span>
  </div>

  <!-- centre popup -->
  <div class="absolute left-[921px] top-[491px] w-[429px] border-2 border-black bg-white text-[#333] text-[15.400px] whitespace-nowrap">
    <table class="w-full table-fixed border-collapse">
      <colgroup><col class="w-[312px]"><col></colgroup>
      <tbody>
        <tr><td colspan="2" class="h-[24px] bg-[#0060ae] text-white pl-[11px] p-0 leading-[20px]">T2403(Gaemi)</td></tr>
        <tr><td colspan="2" class="h-[24px] border-y border-[#333] px-[5px] py-0 leading-[20px]">Issued at 2024/07/24 16:45 UTC</td></tr>
        <tr><td colspan="2" class="h-[24px] border-y border-[#333] px-[5px] py-0 leading-[20px] bg-[#d9ecff] text-center">Analysis at 07/24 16 UTC</td></tr>
        <tr><td class="h-[24px] border-y border-r border-[#333] px-[5px] py-0 leading-[20px]">Grade</td><td class="border-y border-[#333] px-[5px] py-0 leading-[20px]">TY</td></tr>
        <tr><td class="h-[24px] border-y border-r border-[#333] px-[5px] py-0 leading-[20px]">Scale</td><td class="border-y border-[#333] px-[5px] py-0 leading-[20px]">Large</td></tr>
        <tr><td class="h-[24px] border-y border-r border-[#333] px-[5px] py-0 leading-[20px]">Intensity</td><td class="border-y border-[#333] px-[5px] py-0 leading-[20px]">-</td></tr>
        <tr><td class="h-[24px] border-y border-r border-[#333] px-[5px] py-0 leading-[20px]">Central pressure</td><td class="border-y border-[#333] px-[5px] py-0 leading-[20px]">955 hPa</td></tr>
        <tr><td class="h-[24px] border-y border-r border-[#333] px-[5px] py-0 leading-[20px]">Maximum sustained wind speed near center</td><td class="border-y border-[#333] px-[5px] py-0 leading-[20px]">40 m/s (80 kt)</td></tr>
        <tr><td class="h-[24px] border-t border-r border-[#333] px-[5px] py-0 leading-[20px]">Maximum wind gust speed</td><td class="border-t border-[#333] px-[5px] py-0 leading-[20px]">60 m/s (115 kt)</td></tr>
      </tbody>
    </table>
  </div>

  <!-- side panel -->
  <div class="absolute left-[1529px] top-[391px] w-[380px] h-[440px] bg-white flex overflow-hidden text-[#333] text-[15.400px] leading-[23px]">
    <div class="w-[365px] pl-[7px] pt-[6px] overflow-hidden">
      <div class="w-[354px] border-x-2 border-t-2 border-black">
        <table class="w-full table-fixed border-collapse">
          <colgroup><col class="w-[152px]"><col></colgroup>
          <tbody>
            <tr><td colspan="2" class="h-[27px] bg-[#0060ae] text-white pl-[10px] py-0">T2403(Gaemi)</td></tr>
            <tr><td colspan="2" class="h-[28px] border-y border-[#222] px-[5px] py-0">Issued at 2024/07/24 16:45 UTC</td></tr>
            <tr><td colspan="2" class="h-[29px] border-y border-[#222] px-[5px] py-0 bg-[#d9ecff] text-center">Analysis at 07/24 16 UTC</td></tr>
            <tr><td class="h-[28px] border-y border-r border-[#222] px-[5px] py-0">Grade</td><td class="border-y border-[#222] px-[5px] py-0">TY</td></tr>
            <tr><td class="h-[29px] border-y border-r border-[#222] px-[5px] py-0">Scale</td><td class="border-y border-[#222] px-[5px] py-0">Large</td></tr>
            <tr><td class="h-[29px] border-y border-r border-[#222] px-[5px] py-0">Intensity</td><td class="border-y border-[#222] px-[5px] py-0">-</td></tr>
            <tr><td class="h-[51px] border-y border-r border-[#222] px-[5px] py-0">Center position</td><td class="border-y border-[#222] px-[5px] py-0">N24°25′ (24.4°)<br>E121°40′ (121.7°)</td></tr>
            <tr><td class="h-[52px] border-y border-r border-[#222] px-[5px] py-0">Direction and speed of movement</td><td class="border-y border-[#222] px-[5px] py-0">W 15 km/h (7 kt)</td></tr>
            <tr><td class="h-[28px] border-y border-r border-[#222] px-[5px] py-0">Central pressure</td><td class="border-y border-[#222] px-[5px] py-0">955 hPa</td></tr>
            <tr><td class="h-[75px] border-y border-r border-[#222] px-[5px] py-0">Maximum sustained wind speed near center</td><td class="border-y border-[#222] px-[5px] py-0">40 m/s (80 kt)</td></tr>
            <tr><td class="h-[51px] border-y border-r border-[#222] px-[5px] py-0">Maximum wind gust speed</td><td class="border-y border-[#222] px-[5px] py-0">60 m/s (115 kt)</td></tr>
            <tr><td class="h-[28px] border-r border-[#222] px-[5px] py-0"></td><td></td></tr>
          </tbody>
        </table>
      </div>
    </div>
    <div class="w-[15px] bg-[#f1f1f1] flex flex-col items-center shrink-0">
      <span class="mt-[5px] w-0 h-0 border-x-[4px] border-x-transparent border-b-[5px] border-b-[#a3a3a3]"></span>
      <span class="mt-[5px] w-[11px] h-[71px] bg-[#c1c1c1]"></span>
      <span class="mt-auto mb-[5px] w-0 h-0 border-x-[4px] border-x-transparent border-t-[5px] border-t-[#505050]"></span>
    </div>
  </div>

  <!-- bottom right launcher -->
  <span class="absolute left-[1819px] top-[831px] w-0 h-0 border-x-[10px] border-x-transparent border-t-[11px] border-t-white"></span>
  <svg class="absolute left-[1748px] top-[838px]" width="164" height="58" viewBox="1748 1004 164 58">
    <defs>
      <linearGradient id="yel" x1="0" y1="0" x2="0" y2="1"><stop offset="0" stop-color="#fff35a"/><stop offset="1" stop-color="#f7c600"/></linearGradient>
    </defs>
    <circle cx="1774" cy="1033" r="23" fill="url(#yel)" stroke="#a9a9a9" stroke-width="2.500"/>
    <circle cx="1765" cy="1022" r="3" fill="#555"/>
    <path fill="#555" d="M1759 1026h11l8-4 1 2-6 5v7l-1 14h-3l-1-12h-1l-1 12h-3l-1-14v-5l-3 5-1-1z"/>
    <rect x="1772" y="1014" width="17" height="14" fill="#2e7d32" stroke="#666" stroke-width="1.500"/>
    <text x="1780" y="1026" font-size="12" font-weight="700" fill="#ffffff" text-anchor="middle">?</text>
    <circle cx="1829" cy="1033" r="26" fill="#35e5ff" opacity="0.45"/>
    <circle cx="1829" cy="1033" r="23.500" fill="#33e4fb" stroke="#8fb8c0" stroke-width="2.500"/>
    <path fill="#27a6c4" d="M1827 1020l22 22-5 10-14 3-10-15z"/>
    <circle cx="1825" cy="1023" r="11" fill="#1fb5d9" stroke="#e6e6e6" stroke-width="3"/>
    <path fill="#e6e6e6" d="M1830 1033l4-3 5 6-4 3z"/>
    <path fill="#222" d="M1835 1039l5-4 6 7-5 4z"/>
    <text x="1830" y="1052" font-size="9.500" font-weight="700" fill="#111111" text-anchor="middle" font-family="DejaVu Serif, serif">more</text>
    <circle cx="1884" cy="1033" r="23" fill="#f07a22" stroke="#a9a9a9" stroke-width="2.500"/>
    <path fill="#fff" stroke="#2f6fb7" stroke-width="1.500" d="M1869 1021c5-1 9 0 13 3v19c-4-3-8-4-13-3zM1883 1024c4-3 8-4 13-3v19c-5-1-9 0-13 3z"/>
    <text x="1889" y="1039" font-size="15" font-weight="700" fill="#2f6fb7" text-anchor="middle" font-family="DejaVu Serif, serif">i</text>
  </svg>
  <div class="absolute left-[1739px] top-[896px] w-[181px] h-[18px] bg-white/70 text-[#0060c0] text-[12.200px] leading-[18px] pl-[5px] whitespace-nowrap">© Japan Meteorological Agency</div>
</div>
</body>
</html>
